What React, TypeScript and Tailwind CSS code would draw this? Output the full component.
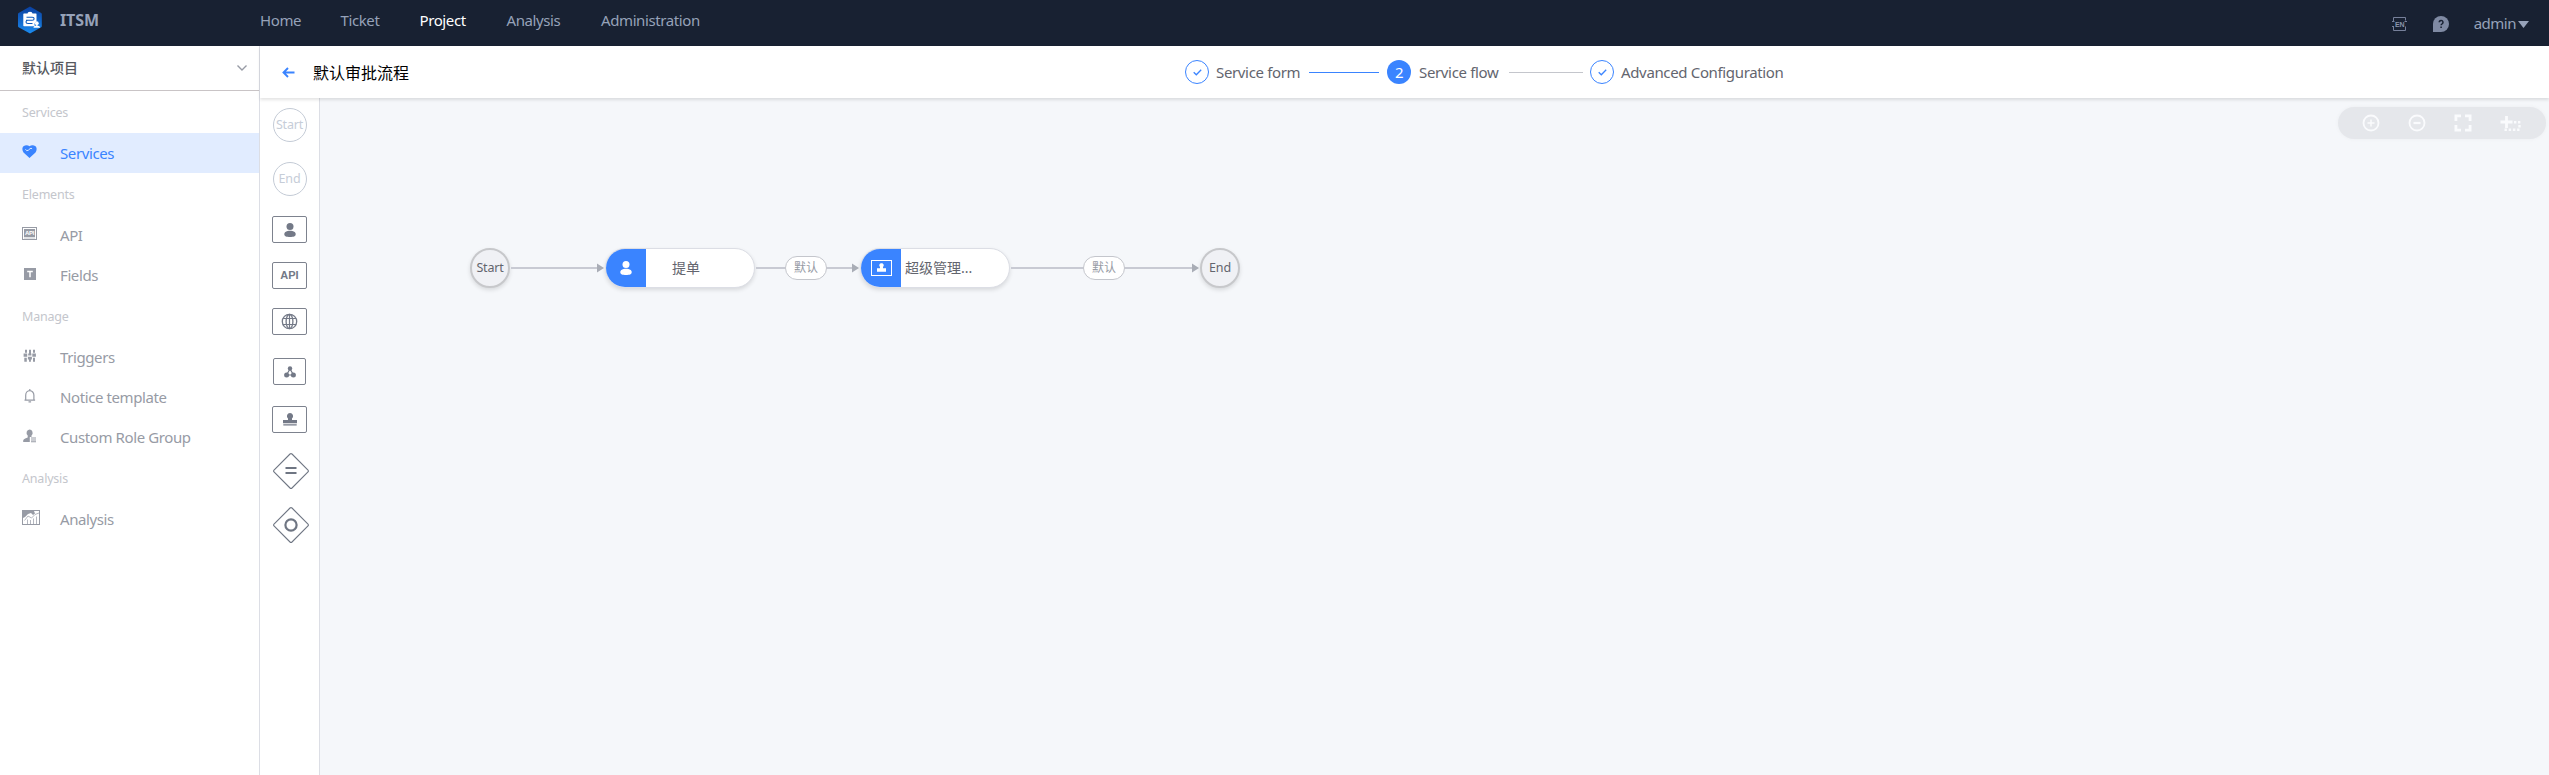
import React from "react";

type IconProps = { className?: string };

const Logo = () => (
  <svg width="26" height="28" viewBox="0 0 26 28" className="block">
    <defs>
      <linearGradient id="lg" x1="0" y1="0" x2="0" y2="1">
        <stop offset="0" stopColor="#0a3f9f" />
        <stop offset="1" stopColor="#1b8cf0" />
      </linearGradient>
    </defs>
    <path d="M13 0.5 L24.2 7 a1.5 1.5 0 0 1 .6 1.2 V20 a1.5 1.5 0 0 1 -.6 1.2 L13 27.6 L1.6 21.2 A1.5 1.5 0 0 1 1 20 V8.2 A1.5 1.5 0 0 1 1.6 7 Z" fill="url(#lg)" />
    <path d="M7 7.5h3.500a2.500 1.800 0 0 1 5 0H19q.5 0 .5.5v7.500a3.200 3.200 0 0 0-1.500 4.800H7q-.7 0-.7-.7V8q0-.5.7-.5z" fill="#fff" />
    <path d="M9.500 11.300h5.800q1.800 0 1.800 1.500t-1.800 1.500H11q-2 0-2 1.600T11 17.500h4.500M9 14.300h7.500" stroke="#0d5bbd" strokeWidth="1.100" fill="none" />
    <circle cx="19.800" cy="17.200" r="1.900" fill="#fff" />
    <path d="M19.200 18.500h1.200v1q2.800.2 2.800 2.200h-6.800q0-2 2.800-2.200z" fill="#fff" />
  </svg>
);

const LangIcon = () => (
  <svg width="16" height="16" viewBox="0 0 16 16" className="block" fill="none" stroke="#76809a" strokeWidth="1">
    <path d="M1.500 5.500V1.500h12v3M1.500 10.500v4h12v-4M0 5.500h2.500M12.500 5.500h2.500M0 10.500h2" />
    <text x="7.800" y="10.800" textAnchor="middle" stroke="none" fill="#8a94ab" className="font-['Liberation_Sans',sans-serif] text-[7px] font-bold">EN</text>
  </svg>
);

const HelpIcon = () => (
  <svg width="16" height="16" viewBox="0 0 16 16" className="block">
    <path d="M8 0a8 8 0 1 1 0 16H0V8a8 8 0 0 1 8-8z" fill="#7f8aa3" />
    <path d="M6.200 6.300a1.900 1.800 0 1 1 2.900 1.500q-1 .5-1 1.500M8.100 10.600v1.500" stroke="#182132" strokeWidth="1.500" fill="none" />
  </svg>
);

const HeartIcon = () => (
  <svg width="16" height="14" viewBox="0 0 16 14" className="block">
    <path d="M7.500 13 1.500 7.500C0 5.500 0 2.500 1.500 1.200 3.500-.2 6 0 7.500 1.300 9 0 11.500-.2 13.500 1.200c1.500 1.300 1.500 4.300 0 6.300z" fill="#3a84ff" />
    <path d="M3.500 4.300q1 2.400 3 .8l1.600-1.500q1-.8 2 .2" stroke="#e1ecff" strokeWidth="1" fill="none" />
  </svg>
);

const ApiIcon = () => (
  <svg width="16" height="14" viewBox="0 0 16 14" className="block">
    <rect x=".5" y=".5" width="14" height="12" fill="#fff" stroke="#979ba5" />
    <rect x="2" y="2" width="11" height="8" fill="#979ba5" />
    <text x="7.500" y="8.300" textAnchor="middle" fill="#fff" className="font-['Liberation_Sans',sans-serif] text-[6px] font-bold">API</text>
    <path d="M2 11h11" stroke="#c3c6cc" strokeWidth="1" />
  </svg>
);

const FieldIcon = () => (
  <svg width="16" height="14" viewBox="0 0 16 14" className="block">
    <rect x="2" y="1" width="12" height="12" fill="#979ba5" />
    <path d="M5.200 4.500h5.600M8 4.500v5.800" stroke="#fff" strokeWidth="1.500" fill="none" />
  </svg>
);

const TriggerIcon = () => (
  <svg width="16" height="14" viewBox="0 0 16 14" className="block" fill="#979ba5">
    <path d="M3 .8h2v3H3zM7 .8h2v5H7zM11 .8h2v3h-2zM1.600 4.600h3.600v3.200H1.600zM6.200 4.600h3.200v2H6.200zM10.300 4.600h3.600v3.200h-3.600zM2.300 8.800h2.500v4H2.300zM5.900 7.800h4v2.800h-1v2.200H7v-2.200H5.900zM11 8.800h2v4h-2z" />
  </svg>
);

const BellIcon = () => (
  <svg width="16" height="14" viewBox="0 0 16 14" className="block" fill="none" stroke="#979ba5" strokeWidth="1.200">
    <path d="M2.500 11.200h10.600M3.700 11V6.200a4.100 4.500 0 0 1 8.200 0V11M7.800 0v1.800M6.500 12.800h2.600" />
  </svg>
);

const RoleIcon = () => (
  <svg width="16" height="14" viewBox="0 0 16 14" className="block" fill="#979ba5">
    <path d="M7.500.5a3.200 3.400 0 0 1 2 6v1.500h-1.700v5H1.200v-1.500q0-1.700 4.500-3V6.500a3.200 3.400 0 0 1 1.800-6z" />
    <path d="M9 8.500h5v1H9zM9 10.500h5v1H9zM9 12.200h5v1H9z" />
  </svg>
);

const ChartIcon = () => (
  <svg width="18" height="16" viewBox="0 0 18 16" className="block">
    <rect x=".5" y=".5" width="17" height="14" fill="#fff" stroke="#979ba5" />
    <path d="M1 1h11l1 2.500-2 1.500-2-2-3 1-3 3-2 1z" fill="#979ba5" />
    <path d="M2.500 10.500l3.500-4.500 3.500 2L13 4.500l4-1.500M5.500 14V9.500M8.500 14v-4M11.500 14V8.500M14.500 14V6.500" stroke="#b5b8c0" strokeWidth="1" fill="none" />
  </svg>
);

const UserGlyph = ({ className }: IconProps) => (
  <svg width="12" height="14" viewBox="0 0 12 14" className={className} fill="currentColor">
    <circle cx="6" cy="3.600" r="3.500" />
    <path d="M.3 11.200c0-2.200 2.500-3.400 5.700-3.400s5.700 1.200 5.700 3.400S9.500 13.900 6 13.900.3 13.400.3 11.200z" />
  </svg>
);

const GlobeGlyph = () => (
  <svg width="17" height="17" viewBox="0 0 17 17" className="-mt-px block" fill="none" stroke="currentColor" strokeWidth="1.300">
    <circle cx="8.500" cy="8.500" r="7.200" />
    <ellipse cx="8.500" cy="8.500" rx="3.400" ry="7.200" />
    <path d="M8.500 1.500v14M2 5.500h13M2 11.500h13" strokeWidth="1.200" />
  </svg>
);

const NodesGlyph = () => (
  <svg width="12" height="12" viewBox="0 0 12 12" className="block" fill="currentColor">
    <path d="M6 3 2.500 9h7z" fill="none" stroke="currentColor" strokeWidth="1.200" />
    <circle cx="6" cy="2.400" r="2.200" />
    <circle cx="2.600" cy="9" r="2.500" />
    <circle cx="9.400" cy="9" r="2.500" />
  </svg>
);

const StampGlyph = () => (
  <svg width="14" height="13" viewBox="0 0 14 13" className="block" fill="currentColor">
    <path d="M7 0a3.200 3.200 0 0 1 2 5.600V7h5v3.300H0V7h5V5.600A3.200 3.200 0 0 1 7 0zM.3 11.300h13.400v1.300H.3z" />
  </svg>
);

const Diamond = ({ children }: { children: React.ReactNode }) => (
  <svg width="36" height="36" viewBox="0 0 36 36" className="block" fill="none" stroke="#6f7683" strokeWidth="1.100">
    <path d="M17 1q1-.8 2 0l16 16q.8 1 0 2L19 35q-1 .8-2 0L1 19q-.8-1 0-2z" />
    {children}
  </svg>
);

const nav = [
  { t: "Home", c: "w-[80.500px] text-[#96a2b9]" },
  { t: "Ticket", c: "w-[79px] text-[#96a2b9]" },
  { t: "Project", c: "w-[87px] text-white" },
  { t: "Analysis", c: "w-[94.500px] text-[#96a2b9]" },
  { t: "Administration", c: "text-[#96a2b9]" },
];

const groups = [
  { t: "Services", items: [{ t: "Services", icon: <HeartIcon />, active: true }] },
  { t: "Elements", items: [{ t: "API", icon: <ApiIcon /> }, { t: "Fields", icon: <FieldIcon /> }] },
  {
    t: "Manage",
    items: [
      { t: "Triggers", icon: <TriggerIcon /> },
      { t: "Notice template", icon: <BellIcon /> },
      { t: "Custom Role Group", icon: <RoleIcon /> },
    ],
  },
  { t: "Analysis", items: [{ t: "Analysis", icon: <ChartIcon /> }] },
] as { t: string; items: { t: string; icon: React.ReactNode; active?: boolean }[] }[];

const StepCheck = () => (
  <span className="flex h-6 w-6 shrink-0 items-center justify-center rounded-full border border-[#3a84ff]">
    <svg width="9" height="7" viewBox="0 0 9 7" fill="none" stroke="#3a84ff" strokeWidth="1.300">
      <path d="M.7 3.300l2.600 2.500L8.200.8" />
    </svg>
  </span>
);

const Edge = ({ className, w }: { className: string; w: number }) => (
  <svg width={w} height="10" className={className}>
    <path d={`M0 5H${w - 6}`} stroke="#c8cad3" strokeWidth="2" />
    <path d={`M${w - 7} .5L${w} 5l-7 4.500z`} fill="#a9adb6" />
  </svg>
);

const Tool = ({ children, className }: { children: React.ReactNode; className: string }) => (
  <div className={`flex h-[27px] shrink-0 items-center justify-center rounded-[2px] border border-[#7d828e] text-[#737987] ${className}`}>
    {children}
  </div>
);

export default function App() {
  return (
    <div className="flex h-[775px] w-[2549px] flex-col overflow-hidden bg-white font-['Noto_Sans','Noto_Sans_CJK_SC',sans-serif]">
      <header className="flex h-[46px] shrink-0 bg-[#182132]">
        <div className="flex w-[260px] items-start pl-[17px] pt-[6px]">
          <Logo />
          <span className="ml-[17px] text-base leading-7 font-bold tracking-[-0.1px] text-[#96a2b9]">ITSM</span>
        </div>
        <nav className="flex flex-1 text-[15px] leading-10 tracking-[-0.4px]">
          {nav.map((n) => (
            <span key={n.t} className={n.c}>{n.t}</span>
          ))}
        </nav>
        <div className="flex items-center pr-5 pt-[2px]">
          <LangIcon />
          <div className="ml-[25px]"><HelpIcon /></div>
          <span className="-mt-[2px] ml-[25px] text-[15px] leading-5 tracking-[-0.5px] text-[#96a2b9]">admin</span>
          <svg width="11" height="7" viewBox="0 0 12 7" className="ml-[2px]" preserveAspectRatio="none"><path d="M0 0h12L6 7z" fill="#96a2b9" /></svg>
        </div>
      </header>

      <div className="flex min-h-0 flex-1">
        <aside className="w-[260px] shrink-0 border-r border-[#dcdee5]">
          <div className="flex h-[45px] items-center justify-between border-b border-[#c9c4c6] pr-3 pl-[22px]">
            <span className="text-sm leading-5 font-medium text-[#56585e]">默认项目</span>
            <svg width="10" height="6" viewBox="0 0 10 6" fill="none" stroke="#979ba5" strokeWidth="1.400"><path d="M.5.5L5 5 9.500.5" /></svg>
          </div>
          {groups.map((g) => (
            <div key={g.t}>
              <div className="h-[42px] pl-[22px] text-[12.500px] leading-[43px] tracking-[-0.2px] text-[#c4c6cc]">{g.t}</div>
              {g.items.map((it) => (
                <div key={it.t} className={`flex h-10 items-center pl-[22px] text-[15px] tracking-[-0.4px] ${it.active ? "bg-[#e1ecff] text-[#3a84ff]" : "text-[#979ba5]"}`}>
                  <span className="w-[38px] shrink-0 pb-[2px]">{it.icon}</span>
                  <span className="leading-5">{it.t}</span>
                </div>
              ))}
            </div>
          ))}
        </aside>

        <main className="flex min-w-0 flex-1 flex-col">
          <div className="z-10 flex h-[52px] shrink-0 items-center bg-white pl-[22px] shadow-[0_2px_3px_rgba(0,0,0,0.11)]">
            <svg width="13" height="11" viewBox="0 0 13 11" fill="none" stroke="#3a84ff" strokeWidth="1.900"><path d="M12.500 5.500H1.500M6 1L1.500 5.500 6 10" /></svg>
            <span className="ml-[18px] w-[872px] pt-[2px] text-base leading-6 text-black">默认审批流程</span>
            <div className="flex items-center text-[15px] leading-6 tracking-[-0.35px] text-[#63656e]">
              <StepCheck />
              <span className="ml-[7px] w-[93px]">Service form</span>
              <span className="h-px w-[70px] bg-[#3a84ff]" />
              <span className="ml-2 flex h-6 w-6 items-center justify-center rounded-full bg-[#3a84ff] text-white">2</span>
              <span className="ml-2 w-[90px]">Service flow</span>
              <span className="mr-[7px] h-px w-[74px] bg-[#c4c6cc]" />
              <StepCheck />
              <span className="ml-[7px] whitespace-nowrap">Advanced Configuration</span>
            </div>
          </div>

          <div className="flex min-h-0 flex-1">
            <div className="flex w-[60px] shrink-0 flex-col items-center border-r border-[#dcdee5] pt-[10px]">
              <div className="flex h-[34px] w-[34px] items-center justify-center rounded-full border border-[#c4cbd6] text-[12.500px] leading-none tracking-[-0.2px] text-[#c6cdd8]">Start</div>
              <div className="mt-5 flex h-[34px] w-[34px] items-center justify-center rounded-full border border-[#c4cbd6] text-[12.500px] leading-none tracking-[-0.2px] text-[#c6cdd8]">End</div>
              <Tool className="mt-5 w-[35px]"><UserGlyph className="block" /></Tool>
              <Tool className="mt-[19px] w-[35px]"><span className="font-['Liberation_Sans',sans-serif] text-[11px] font-bold">API</span></Tool>
              <Tool className="mt-[19px] w-[35px]"><GlobeGlyph /></Tool>
              <Tool className="mt-[23px] w-[33px]"><NodesGlyph /></Tool>
              <Tool className="mt-[21px] w-[35px]"><StampGlyph /></Tool>
              <div className="mt-5 pl-[3px]"><Diamond><path d="M12.500 15h11M12.500 20h11" strokeWidth="2" /></Diamond></div>
              <div className="mt-[18px] pl-[3px]"><Diamond><circle cx="18" cy="18" r="5.600" strokeWidth="2.200" /></Diamond></div>
            </div>

            <div className="relative flex-1 bg-[#f5f7fa]">
              <div className="absolute top-[150px] left-[150px] flex h-10 w-10 items-center justify-center rounded-full border-2 border-[#c7c8cb] bg-[#f0f1f5] text-[12.500px] tracking-[-0.2px] text-[#63656e] shadow-[0_2px_4px_rgba(0,0,0,0.12)]">Start</div>
              <Edge className="absolute top-[165px] left-[191px]" w={93} />
              <div className="absolute top-[150px] left-[285px] flex h-10 w-[150px] overflow-hidden rounded-full border border-[#dcdee5] bg-white text-sm text-[#63656e] shadow-[0_2px_4px_rgba(0,0,0,0.12)]">
                <div className="flex w-10 shrink-0 items-center justify-center bg-[#3a84ff] text-white"><UserGlyph className="block" /></div>
                <div className="flex flex-1 items-center pl-[26px]">提单</div>
              </div>
              <Edge className="absolute top-[165px] left-[436px]" w={103} />
              <div className="absolute top-[158px] left-[465px] flex h-6 w-[42px] items-center justify-center rounded-full border border-[#c4c6cc] bg-white text-xs text-[#979ba5]">默认</div>
              <div className="absolute top-[150px] left-[540px] flex h-10 w-[150px] overflow-hidden rounded-full border border-[#dcdee5] bg-white text-sm text-[#63656e] shadow-[0_2px_4px_rgba(0,0,0,0.12)]">
                <div className="flex w-10 shrink-0 items-center justify-center bg-[#3a84ff]">
                  <svg width="21" height="16" viewBox="0 0 21 16"><rect x=".5" y=".5" width="20" height="15" fill="none" stroke="#fff" strokeWidth="1" /><path d="M10.500 3.200a2.100 2.100 0 0 1 1.500 3.700v1.300h3v3.600H6V8.200h3V6.900a2.100 2.100 0 0 1 1.500-3.700z" fill="#fff" /></svg>
                </div>
                <div className="flex flex-1 items-center pl-1">超级管理...</div>
              </div>
              <Edge className="absolute top-[165px] left-[691px]" w={188} />
              <div className="absolute top-[158px] left-[763px] flex h-6 w-[42px] items-center justify-center rounded-full border border-[#c4c6cc] bg-white text-xs text-[#979ba5]">默认</div>
              <div className="absolute top-[150px] left-[880px] flex h-10 w-10 items-center justify-center rounded-full border-2 border-[#c7c8cb] bg-[#f0f1f5] text-[12.500px] tracking-[-0.2px] text-[#63656e] shadow-[0_2px_4px_rgba(0,0,0,0.12)]">End</div>

              <div className="absolute top-[9px] right-[3px] flex h-8 w-[208px] items-center rounded-full bg-[#e5e7eb] pl-[24px] shadow-[0_0_4px_rgba(0,0,0,0.04)]">
                <svg width="18" height="18" viewBox="0 0 18 18" fill="none" stroke="#fafbfd" strokeWidth="1.800"><circle cx="9" cy="9" r="7.500" /><path d="M9 5.500v7M5.500 9h7" strokeWidth="1.500" /></svg>
                <svg width="18" height="18" viewBox="0 0 18 18" className="ml-7" fill="none" stroke="#fafbfd" strokeWidth="1.800"><circle cx="9" cy="9" r="7.500" /><path d="M5.500 9h7" strokeWidth="2.200" /></svg>
                <svg width="18" height="18" viewBox="0 0 18 18" className="ml-7" fill="none" stroke="#fafbfd" strokeWidth="2.800"><path d="M1.900 7V1.900H7M11 1.900h5.100V7M16.100 11v5.100H11M7 16.100H1.900V11" /></svg>
                <svg width="21" height="18" viewBox="0 0 21 18" className="ml-[28px]" fill="none" stroke="#fafbfd" strokeWidth="2.400"><path d="M6.500 2v12M.5 8h12" strokeWidth="2.800" /><path d="M14 8.200h7M19.500 11v3" strokeDasharray="2.400 1.600" /><path d="M4.500 15.800h16" strokeDasharray="2.400 1.800" /></svg>
              </div>
            </div>
          </div>
        </main>
      </div>
    </div>
  );
}
